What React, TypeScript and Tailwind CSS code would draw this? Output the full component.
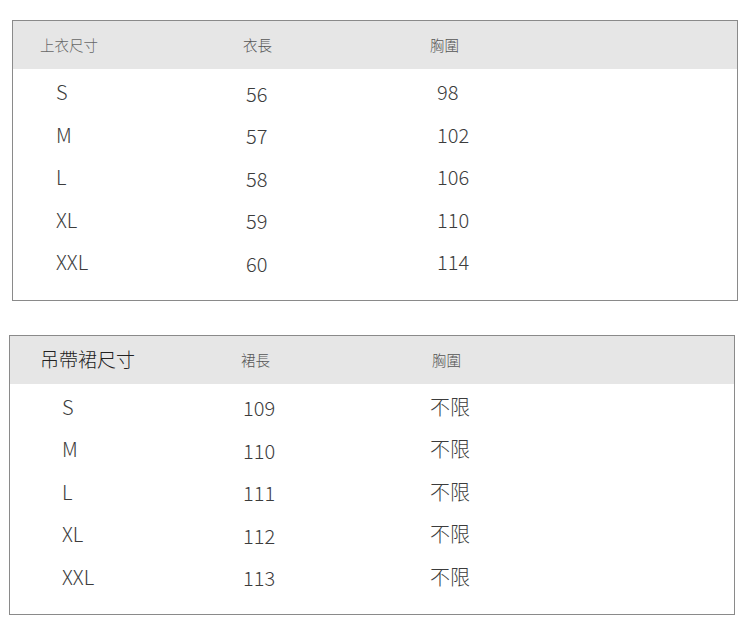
const FONT = "font-['Noto_Sans_CJK_TC','Noto_Sans_CJK_SC',sans-serif]"

type Row = [string, string, string]

type SizeTableProps = {
  title: string
  titleClass: string
  lengthLabel: string
  rows: Row[]
  className: string
  cols: string
  headPad: [string, string, string]
  cellPad: [string, string, string]
}

function SizeTable({ title, titleClass, lengthLabel, rows, className, cols, headPad, cellPad }: SizeTableProps) {
  return (
    <div className={`w-[726px] border border-[#8a8a8a] bg-white ${className}`}>
      <div className={`grid ${cols} h-[48px] items-center bg-[#e6e6e6]`}>
        <div className={`${headPad[0]} ${titleClass}`}>{title}</div>
        <div className={`${headPad[1]} text-[14.5px] font-light text-[#555]`}>{lengthLabel}</div>
        <div className={`${headPad[2]} text-[14.5px] font-light text-[#555]`}>胸圍</div>
      </div>
      <div className="pt-[2px] pb-[16px]">
        {rows.map(([size, len, chest]) => (
          <div key={size} className={`grid ${cols} h-[42.5px] items-center text-[20px] font-light text-[#3c3c3c]`}>
            <div className={cellPad[0]}>{size}</div>
            <div className={`${cellPad[1]} pt-[3px]`}>{len}</div>
            <div className={cellPad[2]}>{chest}</div>
          </div>
        ))}
      </div>
    </div>
  )
}

export default function App() {
  return (
    <div className={`h-[634px] w-[750px] bg-white pt-[20px] ${FONT}`}>
      <SizeTable
        title="上衣尺寸"
        titleClass="text-[14.5px] font-light text-[#666]"
        lengthLabel="衣長"
        className="ml-[12px]"
        cols="grid-cols-[230px_187px_1fr]"
        headPad={['pl-[27px]', 'pl-0', 'pl-0']}
        cellPad={['pl-[43px]', 'pl-[3px]', 'pl-[7px]']}
        rows={[
          ['S', '56', '98'],
          ['M', '57', '102'],
          ['L', '58', '106'],
          ['XL', '59', '110'],
          ['XXL', '60', '114'],
        ]}
      />
      <SizeTable
        title="吊帶裙尺寸"
        titleClass="text-[19px] font-light text-[#222]"
        lengthLabel="裙長"
        className="ml-[9px] mt-[34px]"
        cols="grid-cols-[231px_189px_1fr]"
        headPad={['pl-[30px]', 'pl-0', 'pl-[2px]']}
        cellPad={['pl-[52px]', 'pl-[2px]', 'pl-0']}
        rows={[
          ['S', '109', '不限'],
          ['M', '110', '不限'],
          ['L', '111', '不限'],
          ['XL', '112', '不限'],
          ['XXL', '113', '不限'],
        ]}
      />
    </div>
  )
}
